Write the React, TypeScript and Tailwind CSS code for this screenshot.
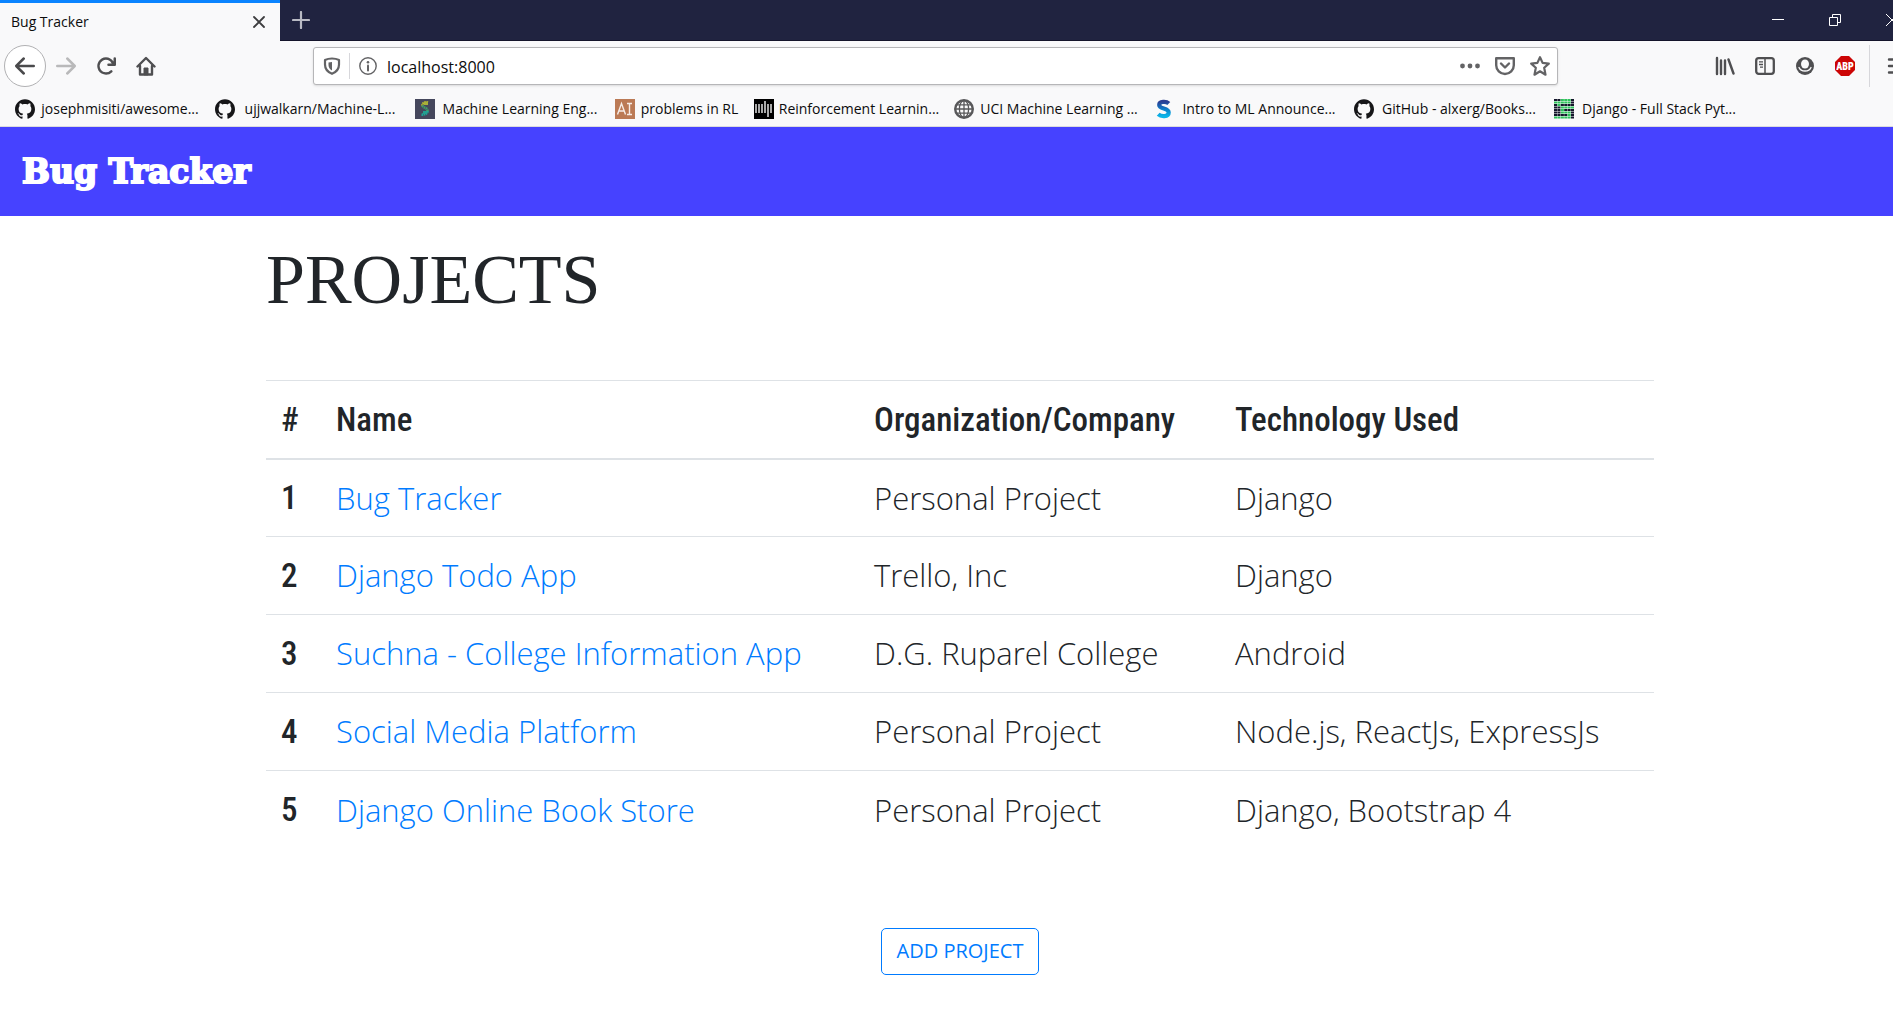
import type { ReactNode } from "react";
import { SiGithub } from "react-icons/si";

const bookmarks: { label: string; icon: ReactNode; short?: boolean }[] = [
  { label: "josephmisiti/awesome...", icon: <SiGithub className="size-5 text-[#161618]" /> },
  { label: "ujjwalkarn/Machine-L...", icon: <SiGithub className="size-5 text-[#161618]" /> },
  { label: "Machine Learning Eng...", icon: <MlEngIcon /> },
  { label: "problems in RL", icon: <AiIcon />, short: true },
  { label: "Reinforcement Learnin...", icon: <MitPressIcon /> },
  { label: "UCI Machine Learning ...", icon: <GlobeIcon /> },
  { label: "Intro to ML Announce...", icon: <ScholarIcon /> },
  { label: "GitHub - alxerg/Books...", icon: <SiGithub className="size-5 text-[#161618]" /> },
  { label: "Django - Full Stack Pyt...", icon: <FullStackIcon /> },
];

const projects = [
  { name: "Bug Tracker", org: "Personal Project", tech: "Django" },
  { name: "Django Todo App", org: "Trello, Inc", tech: "Django" },
  { name: "Suchna - College Information App", org: "D.G. Ruparel College", tech: "Android" },
  { name: "Social Media Platform", org: "Personal Project", tech: "Node.js, ReactJs, ExpressJs" },
  { name: "Django Online Book Store", org: "Personal Project", tech: "Django, Bootstrap 4" },
];

function MlEngIcon() {
  return (
    <svg className="size-5" viewBox="0 0 20 20" aria-hidden="true">
      <rect width="20" height="20" fill="#45475c" />
      <g fill="none" strokeWidth="2.6" strokeDasharray="1.6 0.5">
        <path d="M13 3.5C9.500 2.500 7 4.500 7.500 6.500" stroke="#b9bd2c" />
        <path d="M7.500 6.500C8 9 12.500 8.500 12.500 12" stroke="#3f9f6a" />
        <path d="M12.500 12C12.500 14.500 9.500 16 6.500 15.500" stroke="#1ea79a" />
      </g>
      <path d="M9 3h4v3H9z" fill="#a8b03a" />
      <path d="M8 12h4v3H8z" fill="#22a090" />
    </svg>
  );
}

function AiIcon() {
  return (
    <svg className="size-5" viewBox="0 0 20 20" aria-hidden="true">
      <rect width="20" height="20" fill="#bb7a55" />
      <path d="M2.500 15.500L6.500 4.500L10.500 15.500M4 12h5M12 4.500h5M14.500 4.500v11M12 15.500h5" fill="none" stroke="#f6ece6" strokeWidth="1.400" />
    </svg>
  );
}

function MitPressIcon() {
  return (
    <svg className="size-5" viewBox="0 0 20 20" aria-hidden="true">
      <rect width="20" height="20" fill="#000" />
      <g fill="#a9a9a9">
        <rect x="1" y="5" width="2" height="9" />
        <rect x="4" y="5" width="2" height="9" />
        <rect x="7" y="5" width="2" height="9" />
        <rect x="10" y="2" width="2" height="12" />
        <rect x="13" y="5" width="2" height="13" />
        <rect x="16" y="5" width="2" height="9" />
      </g>
    </svg>
  );
}

function GlobeIcon() {
  return (
    <svg className="size-5" viewBox="0 0 20 20" fill="none" stroke="#58585a" aria-hidden="true">
      <circle cx="10" cy="10" r="8.800" strokeWidth="2.400" />
      <ellipse cx="10" cy="10" rx="4.600" ry="8.500" strokeWidth="1.300" />
      <path d="M10 1v18M1 10h18M2.500 5.800h15M2.500 14.200h15" strokeWidth="1.300" />
    </svg>
  );
}

function ScholarIcon() {
  return (
    <svg className="size-5" viewBox="0 0 20 20" fill="none" aria-hidden="true">
      <defs>
        <linearGradient id="scholar" x1="0" y1="0" x2="0" y2="1">
          <stop offset="0" stopColor="#2a3f94" />
          <stop offset="0.500" stopColor="#0d7cc8" />
          <stop offset="1" stopColor="#0bb4e8" />
        </linearGradient>
      </defs>
      <path d="M14.800 4.500C12.500 2.300 5.200 2 5.200 6C5.200 10.500 14.700 8.500 14.700 13.500C14.700 18.200 7 17.800 4.200 15.200" stroke="url(#scholar)" strokeWidth="4.200" />
    </svg>
  );
}

const fullStackRows = ["DDGGGD", "GGGGGD", "DGDDDD", "DDGGGG", "DDGDDD", "DDGGGD", "DDDDGD", "GGGGGD"];

function FullStackIcon() {
  return (
    <svg className="size-5" viewBox="0 0 20 20" aria-hidden="true">
      {fullStackRows.map((row, y) =>
        row.split("").map((cell, x) => (
          <rect
            key={`${y}-${x}`}
            x={x * 3.4}
            y={y * 2.5}
            width="3.100"
            height="2"
            fill={cell === "G" ? "#2fc25b" : "#15172b"}
          />
        )),
      )}
    </svg>
  );
}

function ToolButton({ label, children }: { label: string; children: ReactNode }) {
  return (
    <button type="button" aria-label={label} className="flex h-10 w-10 shrink-0 items-center justify-center text-[#4f4f51]">
      {children}
    </button>
  );
}

const arrow =
  "M15 7H3.414l4.293-4.293a1 1 0 0 0-1.414-1.414l-6 6a1 1 0 0 0 0 1.414l6 6a1 1 0 0 0 1.414-1.414L3.414 9H15a1 1 0 0 0 0-2z";

function TabBar() {
  return (
    <div className="flex h-[41px] border-b border-[#14142b] bg-[#202340] text-white">
      <div className="-mb-px flex w-[280px] items-center justify-between border-t-[3px] border-[#0a84ff] bg-[#f9f9fa] pr-3 pl-[11px] text-[#0c0c0d]">
        <span className="text-sm">Bug Tracker</span>
        <button type="button" aria-label="Close tab" className="flex size-[18px] items-center justify-center">
          <svg className="size-3" viewBox="0 0 12 12" stroke="#3d3d3f" strokeWidth="1.800" strokeLinecap="round" aria-hidden="true">
            <path d="M1 1l10 10M11 1L1 11" />
          </svg>
        </button>
      </div>
      <button type="button" aria-label="New tab" className="flex w-[42px] items-center justify-center">
        <svg className="size-[18px]" viewBox="0 0 18 18" stroke="#b9bac4" strokeWidth="2.200" strokeLinecap="round" aria-hidden="true">
          <path d="M9 1v16M1 9h16" />
        </svg>
      </button>
      <div className="ml-auto flex">
        <button type="button" aria-label="Minimize" className="flex w-[57px] items-center justify-center">
          <svg className="size-3" viewBox="0 0 12 12" stroke="#fff" aria-hidden="true">
            <path d="M0 5.500h12" />
          </svg>
        </button>
        <button type="button" aria-label="Restore" className="flex w-[57px] items-center justify-center">
          <svg className="size-3" viewBox="0 0 12 12" stroke="#fff" fill="none" aria-hidden="true">
            <path d="M0.500 3.500h8v8h-8zM3.500 3.500v-3h8v8h-3" />
          </svg>
        </button>
        <button type="button" aria-label="Close window" className="flex w-[57px] items-center justify-center">
          <svg className="size-3" viewBox="0 0 12 12" stroke="#fff" aria-hidden="true">
            <path d="M0 0l12 12M12 0L0 12" />
          </svg>
        </button>
      </div>
    </div>
  );
}

function Toolbar() {
  return (
    <div className="flex h-[50px] items-center">
      <button type="button" aria-label="Back" className="ml-1 flex size-[42px] shrink-0 items-center justify-center rounded-full border border-[#b1b1b3] bg-white text-[#4a4a4c]">
        <svg className="size-5" viewBox="0 0 16 16" fill="currentColor" aria-hidden="true">
          <path d={arrow} />
        </svg>
      </button>
      <button type="button" aria-label="Forward" disabled className="flex h-10 w-10 shrink-0 items-center justify-center text-[#b9b9ba]">
        <svg className="size-5 rotate-180" viewBox="0 0 16 16" fill="currentColor" aria-hidden="true">
          <path d={arrow} />
        </svg>
      </button>
      <ToolButton label="Reload">
        <svg className="size-5" viewBox="0 0 16 16" fill="currentColor" aria-hidden="true">
          <path d="M15 1a1 1 0 0 0-1 1v2.418A6.995 6.995 0 1 0 8 15a6.954 6.954 0 0 0 4.950-2.050 1 1 0 0 0-1.414-1.414A5.019 5.019 0 1 1 12.549 6H10a1 1 0 0 0 0 2h5a1 1 0 0 0 1-1V2a1 1 0 0 0-1-1z" />
        </svg>
      </ToolButton>
      <ToolButton label="Home">
        <svg className="size-5" viewBox="0 0 20 20" fill="none" stroke="currentColor" strokeWidth="2.400" strokeLinejoin="round" strokeLinecap="round" aria-hidden="true">
          <path d="M1.500 10.500L10 2l8.500 8.500" />
          <path d="M4 10v8.500h12V10" />
          <path d="M8 18.500v-6.500h4v6.500z" fill="currentColor" strokeWidth="1" />
        </svg>
      </ToolButton>

      <div className="mx-[147px] flex h-[38px] flex-1 items-center rounded-[3px] border border-[#b6b6b8] bg-white text-[#636365] shadow-sm">
        <button type="button" aria-label="Tracking protection" className="flex w-[35px] items-center justify-center">
          <svg className="size-[18px]" viewBox="0 0 18 18" fill="none" stroke="currentColor" aria-hidden="true">
            <path d="M9 1.500C6.500 1.500 4 2 2 3v4.500c0 4.500 2.500 7.500 7 9.300c4.500-1.800 7-4.800 7-9.300V3c-2-1-4.500-1.500-7-1.500z" strokeWidth="2.200" strokeLinejoin="round" />
            <path d="M9 5C7.800 5 6.600 5.200 5.500 5.600V8c0 2.500 1.300 4.300 3.500 5.500z" fill="currentColor" stroke="none" />
          </svg>
        </button>
        <span className="h-[26px] w-px bg-[#d7d7db]" />
        <button type="button" aria-label="Site information" className="flex w-9 items-center justify-center">
          <svg className="size-[18px]" viewBox="0 0 18 18" fill="none" stroke="currentColor" aria-hidden="true">
            <circle cx="9" cy="9" r="8.200" strokeWidth="1.400" />
            <path d="M9 8.500v5" strokeWidth="2" strokeLinecap="round" />
            <circle cx="9" cy="5.200" r="1.300" fill="currentColor" stroke="none" />
          </svg>
        </button>
        <input type="text" aria-label="Address" defaultValue="localhost:8000" className="min-w-0 flex-1 bg-transparent pt-0.5 pl-px text-base text-[#0c0c0d] outline-none" />
        <button type="button" aria-label="Page actions" className="flex w-[35px] items-center justify-center">
          <svg className="size-5" viewBox="0 0 20 20" fill="currentColor" aria-hidden="true">
            <circle cx="2.500" cy="10" r="2.400" />
            <circle cx="10" cy="10" r="2.400" />
            <circle cx="17.500" cy="10" r="2.400" />
          </svg>
        </button>
        <button type="button" aria-label="Save to Pocket" className="flex w-[35px] items-center justify-center">
          <svg className="size-5" viewBox="0 0 20 20" fill="none" stroke="currentColor" strokeWidth="2.400" strokeLinecap="round" strokeLinejoin="round" aria-hidden="true">
            <path d="M1.200 2.200h17.600v7a8.800 8.800 0 0 1-17.600 0z" />
            <path d="M6 7.500l4 4l4-4" />
          </svg>
        </button>
        <button type="button" aria-label="Bookmark this page" className="flex w-[35px] items-center justify-center">
          <svg className="size-5" viewBox="0 0 20 20" fill="none" stroke="currentColor" strokeWidth="2.200" strokeLinejoin="round" aria-hidden="true">
            <path d="M10 1.200l2.600 5.700l6.200 0.700l-4.600 4.200l1.300 6.900L10 15.300l-5.500 3.400l1.300-6.900L1.200 7.600l6.200-0.700z" />
          </svg>
        </button>
      </div>

      <ToolButton label="Library">
        <svg className="size-5" viewBox="0 0 20 20" fill="none" stroke="currentColor" strokeWidth="2.400" strokeLinecap="round" aria-hidden="true">
          <path d="M2 2v16M6 4.500v13.500M10 4.500v13.500M13.500 3.500L18.500 17.500" />
        </svg>
      </ToolButton>
      <ToolButton label="Sidebars">
        <svg className="size-5" viewBox="0 0 20 20" fill="none" stroke="currentColor" aria-hidden="true">
          <rect x="1.200" y="2.200" width="17.600" height="15.600" rx="2.500" strokeWidth="2.300" />
          <path d="M10 2v16" strokeWidth="1.500" />
          <path d="M4 5.800h4M4 8.500h4M5 11.200h3" strokeWidth="1.300" />
        </svg>
      </ToolButton>
      <ToolButton label="Account">
        <svg className="size-[18px]" viewBox="0 0 18 18" fill="none" aria-hidden="true">
          <circle cx="9" cy="9" r="9" fill="currentColor" />
          <ellipse cx="9" cy="7" rx="4" ry="4.600" fill="#f9f9fa" />
          <path d="M3 10.500C4 13 6.500 14 9 14s5-1 6-3.500" stroke="#f9f9fa" strokeWidth="1.300" strokeLinecap="round" />
        </svg>
      </ToolButton>
      <ToolButton label="Adblock Plus">
        <svg className="size-5" viewBox="0 0 20 20" aria-hidden="true">
          <path d="M6 0h8l6 6v8l-6 6H6l-6-6V6z" fill="#cc0505" />
          <text x="10" y="13.500" textAnchor="middle" fontSize="10" fontWeight="900" fontFamily="Roboto Condensed, sans-serif" fill="#fff">
            ABP
          </text>
        </svg>
      </ToolButton>
      <span className="mx-1 h-[42px] w-px bg-[#d7d7db]" />
      <button type="button" aria-label="Menu" className="flex h-10 w-[46px] items-center justify-center text-[#4f4f51]">
        <svg className="size-5" viewBox="0 0 20 20" stroke="currentColor" strokeWidth="2.400" strokeLinecap="round" aria-hidden="true">
          <path d="M2 3.500h16M2 10h16M2 16.500h16" />
        </svg>
      </button>
    </div>
  );
}

function BookmarksBar() {
  return (
    <nav aria-label="Bookmarks" className="flex h-9 items-center border-b border-[#dcdcde] pl-[15px] text-sm text-[#0c0c0d]">
      {bookmarks.map((b) => (
        <a key={b.label} href="#bookmark" className="mr-[14px] flex items-center gap-1 whitespace-nowrap">
          {b.icon}
          <span className={b.short ? "w-[101px] text-center" : "w-[162px] text-center"}>{b.label}</span>
        </a>
      ))}
    </nav>
  );
}

export default function App() {
  return (
    <div className="min-h-screen overflow-hidden bg-white font-['Open_Sans',sans-serif]">
      <div className="w-[calc(100%+27px)]">
        <header className="bg-[#f9f9fa]">
          <TabBar />
          <Toolbar />
          <BookmarksBar />
        </header>

        <div className="flex h-[89px] items-center bg-[#4642ff] px-[22px]">
          <a href="#home" className="font-['DejaVu_Serif',serif] text-[33px] font-bold text-white [-webkit-text-stroke:2px_white]">
            Bug Tracker
          </a>
        </div>

        <main className="mx-auto max-w-[1388px] text-[#212529]">
          <h1 className="pt-4 pb-1 font-['Liberation_Serif',serif] text-[70px] leading-[96px]">PROJECTS</h1>

          <table className="mt-12 w-full table-fixed border-collapse text-left">
            <colgroup>
              <col className="w-[55px]" />
              <col />
              <col className="w-[361px]" />
              <col className="w-[434px]" />
            </colgroup>
            <thead className="font-['Roboto_Condensed',sans-serif] text-[33px]">
              <tr className="h-[78px] border-t border-b-2 border-[#dee2e6]">
                <th scope="col" className="px-[15px] font-medium">#</th>
                <th scope="col" className="px-[15px] font-medium">Name</th>
                <th scope="col" className="px-[15px] font-medium">Organization/Company</th>
                <th scope="col" className="px-[15px] font-medium">Technology Used</th>
              </tr>
            </thead>
            <tbody className="text-[31px] font-[330]">
              {projects.map((p, i) => (
                <tr key={p.name} className="h-[78px] border-b border-[#dee2e6] last:border-b-0">
                  <th scope="row" className="px-[15px] font-['Roboto_Condensed',sans-serif] text-[33px] font-medium">
                    {i + 1}
                  </th>
                  <td className="px-[15px] whitespace-nowrap">
                    <a href="#project" className="text-[#007bff]">{p.name}</a>
                  </td>
                  <td className="px-[15px] whitespace-nowrap">{p.org}</td>
                  <td className="px-[15px] whitespace-nowrap">{p.tech}</td>
                </tr>
              ))}
            </tbody>
          </table>

          <div className="mt-[79px] flex justify-center">
            <button type="button" className="h-[47px] rounded-[5px] border border-[#007bff] px-[15px] text-xl text-[#007bff]">
              ADD PROJECT
            </button>
          </div>
        </main>
      </div>
    </div>
  );
}
